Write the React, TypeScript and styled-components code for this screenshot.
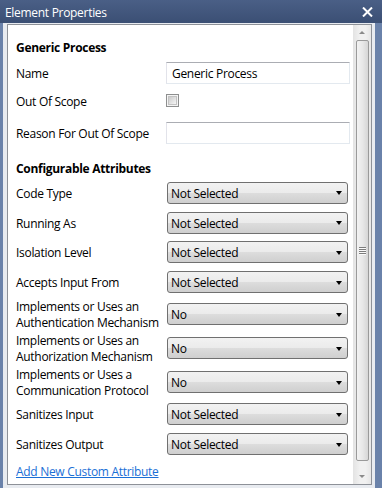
import React from "react";
import styled, { createGlobalStyle } from "styled-components";

const Global = createGlobalStyle`
  html, body { margin: 0; padding: 0; overflow: hidden; }
  body { font-family: "Segoe UI", "Open Sans", "Liberation Sans", sans-serif; letter-spacing: -0.3px; }
`;

const Window = styled.div`
  width: 382px;
  height: 488px;
  background: #6a82aa;
  display: flex;
  flex-direction: column;
  box-sizing: border-box;
`;

const TitleBar = styled.div`
  height: 23px;
  flex: none;
  background: linear-gradient(#4a5f86, #3b4f74);
  color: #fff;
  font-size: 12px;
  display: flex;
  align-items: center;
  justify-content: space-between;
  padding: 1px 9px 0 5px;
  box-sizing: border-box;
`;

const Frame = styled.div`
  flex: 1;
  margin: 0 7px 0 3px;
  background: #e8ebf0;
  padding: 1px 3px 3px 4px;
  display: flex;
  min-height: 0;
`;

const Box = styled.div`
  flex: 1;
  border: 1px solid #8d9198;
  display: flex;
  background: #fff;
  min-height: 0;
`;

const Content = styled.div`
  flex: 1;
  padding: 0 0 0 8px;
  font-size: 12px;
  color: #000;
  display: flex;
  flex-direction: column;
`;

const Heading = styled.div<{ $top: number; $bottom: number }>`
  font-weight: 700;
  line-height: 16px;
  padding: ${(p) => p.$top}px 0 ${(p) => p.$bottom}px;
`;

const Row = styled.div<{ $h: number; $mt?: number }>`
  height: ${(p) => p.$h}px;
  margin-top: ${(p) => p.$mt ?? 0}px;
  display: grid;
  grid-template-columns: 150px 184px;
  align-items: center;
`;

const Label = styled.div`
  line-height: 16px;
  white-space: pre-line;
  padding-top: 2px;
`;

const TextBox = styled.div`
  height: 22px;
  box-sizing: border-box;
  border: 1px solid #e3e9ef;
  border-top-color: #abadb3;
  border-left-color: #e2e3ea;
  background: #fff;
  padding: 1px 5px 0;
  display: flex;
  align-items: center;
`;

const Check = styled.div`
  width: 13px;
  height: 13px;
  box-sizing: border-box;
  border: 1px solid #8e8f8f;
  background: #f4f4f4;
  padding: 1px;
  &::after {
    content: "";
    display: block;
    width: 100%;
    height: 100%;
    box-sizing: border-box;
    border: 1px solid #c3c3c3;
    background: linear-gradient(135deg, #cbcbcb, #f5f5f5);
  }
`;

const Select = styled.div`
  margin-left: 1px;
  width: 181px;
  height: 22px;
  box-sizing: border-box;
  border: 1px solid #707070;
  border-radius: 3px;
  background: linear-gradient(#f2f2f2 0%, #ebebeb 50%, #dddddd 50%, #cfcfcf 100%);
  display: flex;
  align-items: center;
  justify-content: space-between;
  padding: 1px 5px 0 3px;
`;

const Arrow = styled.span`
  width: 0;
  height: 0;
  border-left: 3.5px solid transparent;
  border-right: 3.5px solid transparent;
  border-top: 4px solid #000;
`;

const LinkRow = styled.div`
  height: 24px;
  display: flex;
  align-items: center;
  padding-top: 1px;
`;

const Link = styled.a`
  color: #1a6fd6;
  text-decoration: underline;
  line-height: 16px;
`;

const ScrollBar = styled.div`
  width: 18px;
  flex: none;
  background: linear-gradient(90deg, #e3e3e3, #f1f1f1 40%, #f1f1f1 70%, #e6e6e6);
  display: flex;
  flex-direction: column;
  align-items: center;
`;

const ScrollBtn = styled.div`
  height: 15px;
  width: 100%;
  display: flex;
  align-items: center;
  justify-content: center;
  flex: none;
`;

const Thumb = styled.div`
  flex: 1;
  width: 13px;
  margin: 0 0 8px;
  box-sizing: border-box;
  border: 1px solid #9a9a9a;
  border-radius: 2px;
  background: linear-gradient(90deg, #f3f3f3, #e8e8e8 50%, #d6d6d6);
  display: flex;
  align-items: center;
  justify-content: center;
`;

const Grip = styled.div`
  width: 7px;
  display: flex;
  flex-direction: column;
  gap: 1px;
  span {
    display: block;
    height: 1px;
    background: #7c7c7c;
    box-shadow: 0 1px 0 #fafafa;
  }
`;

const TriUp = styled.span`
  width: 0;
  height: 0;
  border-left: 3px solid transparent;
  border-right: 3px solid transparent;
  border-bottom: 3px solid #8a8a8a;
`;

const TriDown = styled.span`
  width: 0;
  height: 0;
  border-left: 3px solid transparent;
  border-right: 3px solid transparent;
  border-top: 3px solid #8a8a8a;
`;

const SelRow = ({ label, value, h = 30 }: { label: string; value: string; h?: number }) => (
  <Row $h={h}>
    <Label>{label}</Label>
    <Select>
      <span>{value}</span>
      <Arrow />
    </Select>
  </Row>
);

export default function App() {
  return (
    <>
      <Global />
      <Window>
        <TitleBar>
          <span>Element Properties</span>
          <svg width="11" height="10" viewBox="0 0 11 10">
            <path d="M1 0.5 L10 9.5 M10 0.5 L1 9.5" stroke="#fff" strokeWidth="2" />
          </svg>
        </TitleBar>
        <Frame>
          <Box>
            <Content>
              <Heading $top={15} $bottom={2}>Generic Process</Heading>
              <Row $h={30}>
                <Label>Name</Label>
                <TextBox>Generic Process</TextBox>
              </Row>
              <Row $h={26}>
                <Label>Out Of Scope</Label>
                <Check />
              </Row>
              <Row $h={30} $mt={4}>
                <Label>Reason For Out Of Scope</Label>
                <TextBox />
              </Row>
              <Heading $top={13} $bottom={1}>Configurable Attributes</Heading>
              <SelRow label="Code Type" value="Not Selected" />
              <SelRow label="Running As" value="Not Selected" />
              <SelRow label="Isolation Level" value="Not Selected" />
              <SelRow label="Accepts Input From" value="Not Selected" />
              <SelRow h={34} label={"Implements or Uses an\nAuthentication Mechanism"} value="No" />
              <SelRow h={34} label={"Implements or Uses an\nAuthorization Mechanism"} value="No" />
              <SelRow h={34} label={"Implements or Uses a\nCommunication Protocol"} value="No" />
              <SelRow label="Sanitizes Input" value="Not Selected" />
              <SelRow label="Sanitizes Output" value="Not Selected" />
              <LinkRow>
                <Link href="#">Add New Custom Attribute</Link>
              </LinkRow>
            </Content>
            <ScrollBar>
              <ScrollBtn><TriUp /></ScrollBtn>
              <Thumb>
                <Grip><span /><span /><span /><span /></Grip>
              </Thumb>
              <ScrollBtn><TriDown /></ScrollBtn>
            </ScrollBar>
          </Box>
        </Frame>
      </Window>
    </>
  );
}
